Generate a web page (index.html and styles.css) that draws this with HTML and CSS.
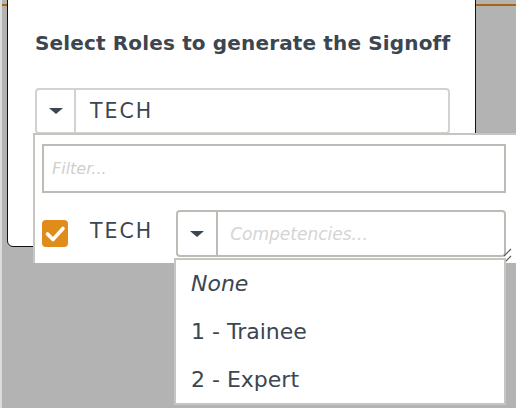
FILE: index.html
```html
<!DOCTYPE html>
<html>
<head>
<meta charset="utf-8">
<link rel="stylesheet" href="styles.css">
</head>
<body>
<div class="topline"></div>
<div class="modal">
  <h2 class="title">Select Roles to generate the Signoff</h2>
  <div class="select">
    <div class="caret-cell"><span class="caret"></span></div>
    <div class="value">TECH</div>
  </div>
</div>

<div class="panel">
  <div class="filter">Filter...</div>
  <div class="row">
    <span class="check">
      <svg width="26" height="27" viewBox="0 0 26 27"><rect x="0" y="0" width="26" height="27" rx="4" fill="#e08c1b"/><path d="M5.5 14 L11 19.5 L21 8.5" fill="none" stroke="#fff" stroke-width="3.6" stroke-linecap="round" stroke-linejoin="round"/></svg>
    </span>
    <span class="role">TECH</span>
    <div class="comp">
      <div class="caret-cell small"><span class="caret"></span></div>
      <div class="placeholder">Competencies...</div>
    </div>
  </div>
  <svg class="grip" width="10" height="16" viewBox="0 0 10 16"><path d="M1 8 L8 1 M1 15 L8 8" stroke="#555" stroke-width="1.2"/></svg>
</div>

<ul class="menu">
  <li class="none">None</li>
  <li>1 - Trainee</li>
  <li>2 - Expert</li>
</ul>
</body>
</html>
```

FILE: styles.css
```css
html, body {
  margin: 0;
  padding: 0;
}
body {
  width: 516px;
  height: 408px;
  overflow: hidden;
  background: #b3b3b3;
  box-shadow: inset 2px 0 0 #dcdcdc;
  font-family: "DejaVu Sans", Verdana, sans-serif;
  color: #3c4650;
  position: relative;
}
.topline {
  position: absolute;
  left: 2px;
  right: 0;
  top: 4px;
  height: 2px;
  background: #a8640f;
}
.modal {
  position: relative;
  margin-left: 7px;
  margin-top: -8px;
  width: 469px;
  height: 255px;
  box-sizing: border-box;
  background: #fff;
  border: 1px solid #111;
  border-radius: 6px;
  padding: 37px 0 0 27px;
}
.title {
  margin: 0;
  font-size: 20px;
  font-weight: 700;
  line-height: 26px;
  letter-spacing: 0.15px;
  white-space: nowrap;
}
.select {
  margin-top: 32px;
  width: 415px;
  height: 46px;
  box-sizing: border-box;
  border: 2px solid #d2d2ce;
  border-radius: 4px;
  display: flex;
  align-items: center;
}
.caret-cell {
  width: 39px;
  height: 100%;
  box-sizing: border-box;
  border-right: 2px solid #d2d2ce;
  display: flex;
  align-items: center;
  justify-content: center;
}
.caret {
  width: 0;
  height: 0;
  border-left: 7px solid transparent;
  border-right: 7px solid transparent;
  border-top: 6px solid #3c4650;
}
.value {
  padding-left: 14px;
  font-size: 20.5px;
  letter-spacing: 2px;
}
.panel {
  position: absolute;
  left: 33px;
  top: 133px;
  width: 485px;
  height: 130px;
  box-sizing: border-box;
  background: #fff;
  border: 2px solid #c6c6c0;
  border-bottom: none;
  padding: 9px 0 0 7px;
}
.filter {
  width: 464px;
  height: 49px;
  box-sizing: border-box;
  border: 2px solid #bcbcb6;
  padding-left: 8px;
  display: flex;
  align-items: center;
  font-size: 16px;
  font-style: italic;
  color: #cfcfcf;
}
.row {
  margin-top: 17px;
  display: flex;
  align-items: center;
}
.check {
  display: flex;
}
.role {
  margin-left: 22px;
  margin-bottom: 5px;
  font-size: 20.5px;
  letter-spacing: 2px;
}
.comp {
  margin-left: 23px;
  width: 330px;
  height: 47px;
  box-sizing: border-box;
  border: 2px solid #bcbcb6;
  border-radius: 4px;
  display: flex;
  align-items: center;
}
.comp .caret-cell {
  width: 40px;
  border-right-color: #bcbcb6;
}
.placeholder {
  padding-left: 12px;
  font-size: 17px;
  font-style: italic;
  color: #d4d4d4;
}
.grip {
  position: absolute;
  left: 468px;
  top: 113px;
}
.menu {
  position: absolute;
  left: 174px;
  top: 258px;
  width: 332px;
  height: 147px;
  box-sizing: border-box;
  margin: 0;
  padding: 0 0 0 15px;
  list-style: none;
  background: #fff;
  border: 2px solid #c6c6c0;
}
.menu li {
  height: 48px;
  line-height: 48px;
  font-size: 22px;
}
.menu .none {
  font-style: italic;
}
```
